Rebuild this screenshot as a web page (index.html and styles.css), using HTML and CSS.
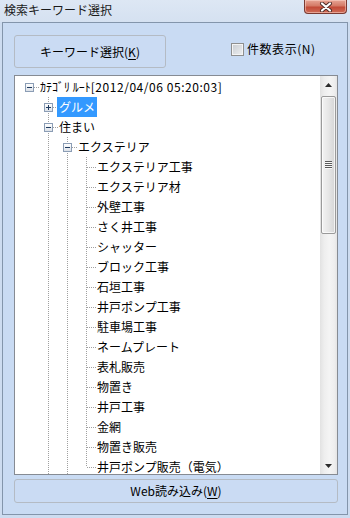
FILE: index.html
```html
<!DOCTYPE html>
<html lang="ja">
<head>
<meta charset="utf-8">
<title>検索キーワード選択</title>
<link rel="stylesheet" href="styles.css">
</head>
<body>
<div class="window">
  <div class="titlebar">
    <span class="title">検索キーワード選択</span>
    <button class="close" aria-label="閉じる">
      <svg width="14" height="10" viewBox="0 0 14 10">
        <path d="M3 1.5 L11 8.5 M11 1.5 L3 8.5" stroke="#4a2a26" stroke-width="4" stroke-linecap="round"/>
        <path d="M3 1.5 L11 8.5 M11 1.5 L3 8.5" stroke="#ffffff" stroke-width="2.2" stroke-linecap="round"/>
      </svg>
    </button>
  </div>
  <div class="client">
    <div class="toprow">
      <button class="btn kw">キーワード選択(<u>K</u>)</button>
      <label class="check"><span class="cbox"></span><span class="latin">件数表示(N)</span></label>
    </div>
    <div class="tree">
      <div class="nodes">
        <div class="row"><span class="c"><span class="exp minus"></span></span><span class="lbl">ｶﾃｺﾞﾘ ﾙｰﾄ<span class="latin">[2012/04/06 05:20:03]</span></span></div>
        <div class="row"><span class="g"></span><span class="c tb"><span class="exp plus"></span></span><span class="lbl sel">グルメ</span></div>
        <div class="row"><span class="g"></span><span class="c tb"><span class="exp minus"></span></span><span class="lbl">住まい</span></div>
        <div class="row"><span class="g"></span><span class="g v"></span><span class="c tb"><span class="exp minus"></span></span><span class="lbl">エクステリア</span></div>
        <div class="row"><span class="g"></span><span class="g v"></span><span class="g v"></span><span class="c tb"></span><span class="lbl">エクステリア工事</span></div>
        <div class="row"><span class="g"></span><span class="g v"></span><span class="g v"></span><span class="c tb"></span><span class="lbl">エクステリア材</span></div>
        <div class="row"><span class="g"></span><span class="g v"></span><span class="g v"></span><span class="c tb"></span><span class="lbl">外壁工事</span></div>
        <div class="row"><span class="g"></span><span class="g v"></span><span class="g v"></span><span class="c tb"></span><span class="lbl">さく井工事</span></div>
        <div class="row"><span class="g"></span><span class="g v"></span><span class="g v"></span><span class="c tb"></span><span class="lbl">シャッター</span></div>
        <div class="row"><span class="g"></span><span class="g v"></span><span class="g v"></span><span class="c tb"></span><span class="lbl">ブロック工事</span></div>
        <div class="row"><span class="g"></span><span class="g v"></span><span class="g v"></span><span class="c tb"></span><span class="lbl">石垣工事</span></div>
        <div class="row"><span class="g"></span><span class="g v"></span><span class="g v"></span><span class="c tb"></span><span class="lbl">井戸ポンプ工事</span></div>
        <div class="row"><span class="g"></span><span class="g v"></span><span class="g v"></span><span class="c tb"></span><span class="lbl">駐車場工事</span></div>
        <div class="row"><span class="g"></span><span class="g v"></span><span class="g v"></span><span class="c tb"></span><span class="lbl">ネームプレート</span></div>
        <div class="row"><span class="g"></span><span class="g v"></span><span class="g v"></span><span class="c tb"></span><span class="lbl">表札販売</span></div>
        <div class="row"><span class="g"></span><span class="g v"></span><span class="g v"></span><span class="c tb"></span><span class="lbl">物置き</span></div>
        <div class="row"><span class="g"></span><span class="g v"></span><span class="g v"></span><span class="c tb"></span><span class="lbl">井戸工事</span></div>
        <div class="row"><span class="g"></span><span class="g v"></span><span class="g v"></span><span class="c tb"></span><span class="lbl">金網</span></div>
        <div class="row"><span class="g"></span><span class="g v"></span><span class="g v"></span><span class="c tb"></span><span class="lbl">物置き販売</span></div>
        <div class="row"><span class="g"></span><span class="g v"></span><span class="g v"></span><span class="c t"></span><span class="lbl">井戸ポンプ販売（電気）</span></div>
        <div class="row"><span class="g"></span><span class="g v"></span><span class="g v"></span></div>
      </div>
      <div class="vscroll">
        <div class="arrow"><svg width="7" height="4" viewBox="0 0 7 4"><polygon points="3.5,0 7,4 0,4" fill="#2b2b2b"/></svg></div>
        <div class="track">
          <div class="thumb"><span class="grip"></span></div>
        </div>
        <div class="arrow"><svg width="7" height="4" viewBox="0 0 7 4"><polygon points="0,0 7,0 3.5,4" fill="#2b2b2b"/></svg></div>
      </div>
    </div>
    <button class="btn web">Web読み込み(<u>W</u>)</button>
  </div>
</div>
</body>
</html>
```

FILE: styles.css
```css
* { box-sizing: border-box; }

html, body {
  margin: 0;
  padding: 0;
}

body {
  width: 350px;
  height: 518px;
  overflow: hidden;
  background: #cddcf0;
  font-family: "Noto Sans CJK JP", "Noto Sans", sans-serif;
  font-size: 12px;
  color: #000;
}

.window {
  display: flex;
  flex-direction: column;
  width: 350px;
  height: 518px;
}

.titlebar {
  height: 22px;
  display: flex;
  justify-content: space-between;
  align-items: flex-start;
  background: linear-gradient(#dde7f4, #d5e1f1);
}

.title {
  padding-left: 4px;
  line-height: 19px;
  font-size: 12px;
  color: #1a1a1a;
}

.close {
  width: 43px;
  height: 14px;
  margin-right: 3px;
  padding: 0;
  border: 1px solid #7a3a32;
  border-top: none;
  border-radius: 0 0 4px 4px;
  background: linear-gradient(#e7a595, #d47a66 45%, #c24a37 55%, #cf6d58);
  display: flex;
  align-items: center;
  justify-content: center;
  box-shadow: inset 0 0 0 1px rgba(255, 220, 210, 0.5);
}

.close svg { display: block; }

.client {
  margin: 0 2px 3px 2px;
  height: 493px;
  border: 1px solid #8395ab;
  background: #c9dbf3;
  padding: 12px 9px 11px 11px;
  display: flex;
  flex-direction: column;
}

.btn {
  font-family: "Noto Sans CJK JP", "Noto Sans", sans-serif;
  font-size: 12px;
  color: #000;
  background: #cadbf3;
  border: 1px solid #b4bbc4;
  border-radius: 3px;
  padding: 0;
  line-height: 20px;
}

.btn u { text-underline-offset: 2px; }

.latin { letter-spacing: 0.55px; }

.toprow {
  height: 33px;
  display: flex;
  align-items: flex-start;
}

.kw {
  width: 152px;
  height: 33px;
}

.check {
  margin-left: 65px;
  margin-top: 7px;
  display: flex;
  align-items: center;
  gap: 3px;
  line-height: 14px;
}

.cbox {
  width: 13px;
  height: 13px;
  border: 1px solid #8e8f8f;
  background: linear-gradient(135deg, #c8ccd1, #eef0f2);
  box-shadow: inset 0 0 0 1px #f4f4f4;
}

.tree {
  margin-top: 7px;
  height: 400px;
  border: 1px solid #868b93;
  background: #fff;
  display: flex;
}

.nodes {
  flex: 1;
  overflow: hidden;
  padding: 1px 0 0 5px;
}

.row {
  height: 20px;
  display: flex;
  align-items: stretch;
}

.g, .c {
  width: 19px;
  height: 20px;
  flex: none;
}

.g.v {
  background: repeating-linear-gradient(to bottom, #a0a0a0 0 1px, transparent 1px 2px) 9px 0 / 1px 20px no-repeat;
}

.c {
  display: flex;
  align-items: flex-start;
  background: repeating-linear-gradient(to right, #a0a0a0 0 1px, transparent 1px 2px) 10px 10px / 9px 1px no-repeat;
}

.c.tb {
  background:
    repeating-linear-gradient(to right, #a0a0a0 0 1px, transparent 1px 2px) 10px 10px / 9px 1px no-repeat,
    repeating-linear-gradient(to bottom, #a0a0a0 0 1px, transparent 1px 2px) 9px 0 / 1px 20px no-repeat;
}

.c.t {
  background:
    repeating-linear-gradient(to right, #a0a0a0 0 1px, transparent 1px 2px) 10px 10px / 9px 1px no-repeat,
    repeating-linear-gradient(to bottom, #a0a0a0 0 1px, transparent 1px 2px) 9px 0 / 1px 10px no-repeat;
}

.exp {
  width: 9px;
  height: 9px;
  margin: 6px 0 0 5px;
  border: 1px solid #8b9db5;
}

.exp.minus {
  background:
    linear-gradient(#1e3a5f, #1e3a5f) 1px 3px / 5px 1px no-repeat,
    linear-gradient(#ffffff, #dce1e8);
}

.exp.plus {
  background:
    linear-gradient(#1e3a5f, #1e3a5f) 1px 3px / 5px 1px no-repeat,
    linear-gradient(#1e3a5f, #1e3a5f) 3px 1px / 1px 5px no-repeat,
    linear-gradient(#ffffff, #dce1e8);
}

.lbl {
  margin-left: -1px;
  padding: 0 2px;
  height: 20px;
  line-height: 20px;
  white-space: nowrap;
}

.lbl.sel {
  background: #3399ff;
  color: #fff;
}

.vscroll {
  width: 17px;
  flex: none;
  display: flex;
  flex-direction: column;
  background: linear-gradient(to right, #e2e2e2, #eeeeee 25%, #f4f4f4 55%, #eeeeee 85%, #e4e4e4);
}

.arrow {
  height: 17px;
  display: flex;
  align-items: center;
  justify-content: center;
}

.arrow svg { display: block; }

.track {
  flex: 1;
  padding: 3px 1px 0 1px;
}

.thumb {
  height: 138px;
  border: 1px solid #9a9a9a;
  border-radius: 2px;
  background: linear-gradient(to right, #f3f3f3, #e6e6e6 50%, #d5d5d5);
  box-shadow: inset 0 0 0 1px rgba(255, 255, 255, 0.7);
  display: flex;
  align-items: center;
  justify-content: center;
}

.grip {
  width: 7px;
  height: 8px;
  background: repeating-linear-gradient(to bottom, #5a5a5a 0 1px, #f8f8f8 1px 2px);
}

.web {
  margin-top: 4px;
  height: 24px;
  width: 100%;
}
```
